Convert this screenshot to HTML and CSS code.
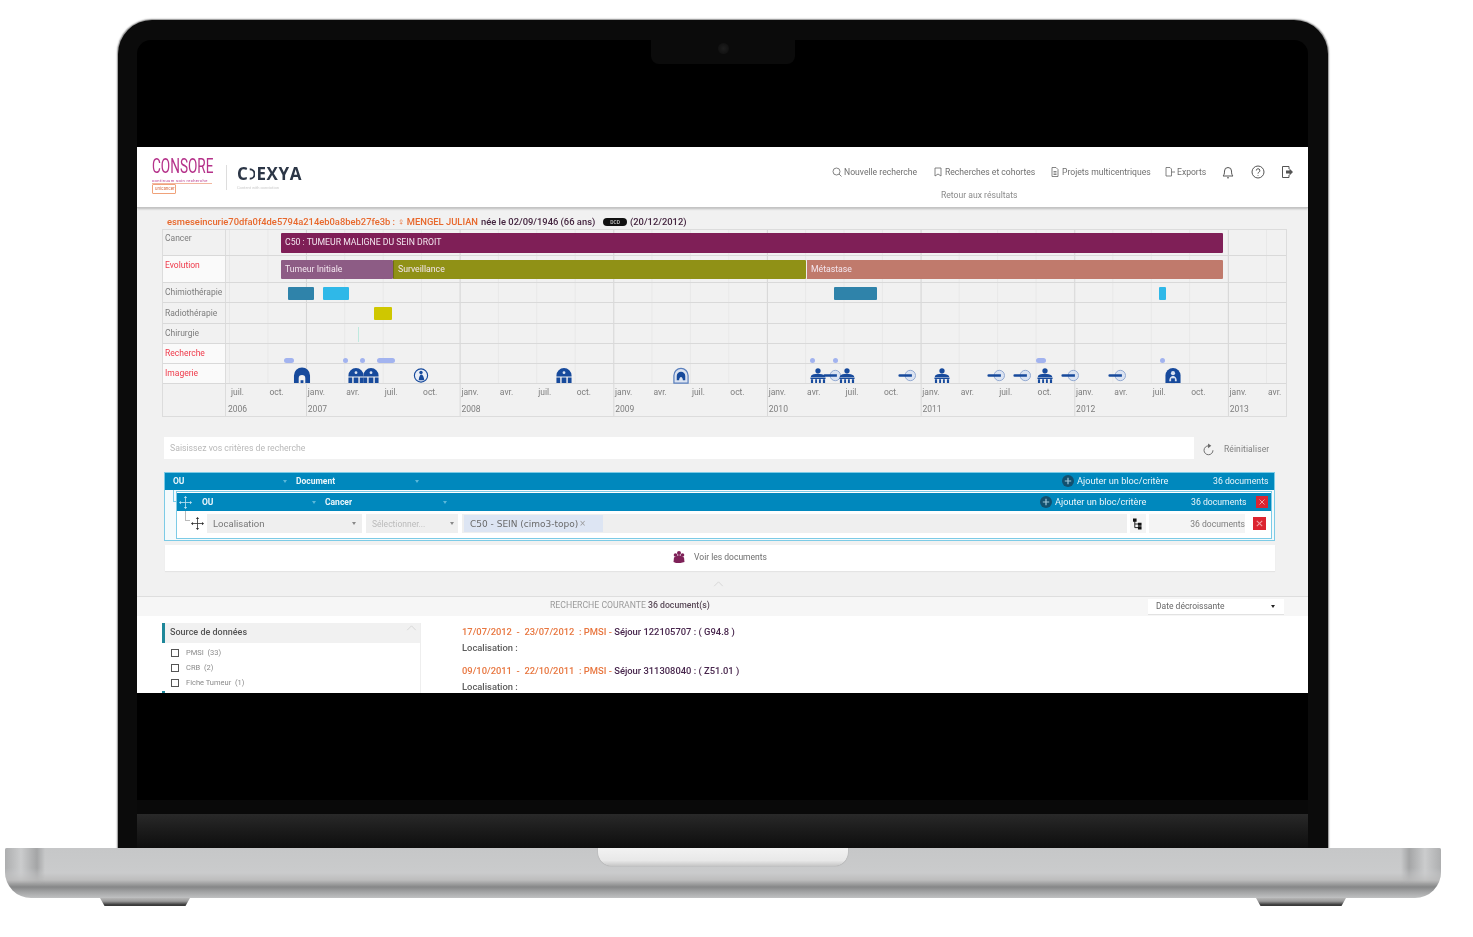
FILE: index.html
```html
<!DOCTYPE html>
<html lang="fr">
<head>
<meta charset="utf-8">
<title>Consore</title>
<link rel="stylesheet" href="styles.css">
</head>
<body>
<svg class="defs" width="0" height="0" aria-hidden="true">
  <symbol id="i-arch" viewBox="0 0 20 18"><path d="M1.500 17V9a8.500 8.500 0 0 1 17 0v8h-5V12a3.500 3.500 0 0 0-7 0v5z"/><path d="M8.500 17v-3h3v3z"/></symbol>
  <symbol id="i-irm" viewBox="0 0 20 18"><path d="M2 10V9a8 8 0 0 1 16 0v1zM2 11h4v6H2zM7.500 11h5v6h-5zM14 11h4v6h-4z"/><circle cx="10" cy="6" r="1.500" fill="#dbe3f1"/></symbol>
  <symbol id="i-circle" viewBox="0 0 20 18"><circle cx="10" cy="9" r="7" fill="#e9eef7" stroke="#174a9c" stroke-width="1.200"/><circle cx="10" cy="5.800" r="1.800"/><path d="M7.500 14c.500-4 1.500-6 3-6s2.500 3 3 6z"/></symbol>
  <symbol id="i-ring" viewBox="0 0 20 18"><path d="M2.500 17V9a7.500 7.500 0 0 1 15 0v8z" fill="#dbe3f1" stroke="#5a7fbd" stroke-width="1.300"/><path d="M5.500 14V9.500a4.500 4.500 0 0 1 9 0V14h-2.500c0-2-1-3.500-2-3.500S8 12 8 14z"/></symbol>
  <symbol id="i-table" viewBox="0 0 20 18"><circle cx="10" cy="4" r="2.800"/><path d="M2.500 9.500c2-3 12-3 15 0v1h-15zM2 11h16v1.800H2zM2.500 13h2.300v4H2.500zM7 13h2v4H7zM11 13h2v4h-2zM15.200 13h2.300v4h-2.300z"/></symbol>
  <symbol id="i-probe" viewBox="0 0 20 18"><circle cx="13.500" cy="9" r="5.500" fill="#dbe3f1" stroke="#8ea6cf" stroke-width="1"/><path d="M2.200 7.800h13v2.600h-13a1.300 1.300 0 0 1 0-2.600z"/></symbol>
  <symbol id="i-dome" viewBox="0 0 20 18"><path d="M2 17V9a8 8 0 0 1 16 0v8z"/><circle cx="10" cy="6.500" r="2.200" fill="#dbe3f1"/><path d="M6 15c0-4 2-5.500 4-5.500s4 1.500 4 5.500z" fill="#dbe3f1"/><path d="M8 12h4v5H8z"/></symbol>
  <symbol id="i-move" viewBox="0 0 16 16"><path d="M8 1v14M1 8h14" fill="none" stroke="currentColor" stroke-width="1"/><path d="M8 0l2 2.500H6zM8 16l-2-2.500h4zM0 8l2.500-2v4zM16 8l-2.500 2V6z" fill="currentColor"/></symbol>
  <symbol id="i-plus" viewBox="0 0 12 12"><circle cx="6" cy="6" r="6" fill="#12506f"/><path d="M6 2.800v6.400M2.800 6h6.400" stroke="#9fc7da" stroke-width="1.200"/></symbol>
  <symbol id="i-x" viewBox="0 0 12 12"><rect width="12" height="12" fill="#dc2430"/><path d="M3.500 3.500l5 5m0-5l-5 5" stroke="#f2a0a4" stroke-width="1"/></symbol>
</svg>

<div class="stage">
  <div class="lid">
    <div class="notch"><span class="camera"></span></div>
    <div class="screen">
      <div class="app">
        <header class="topbar">
          <div class="logo-consore">
            <div class="consore-name">CONSORE</div>
            <div class="consore-sub">continuum soin recherche</div>
            <div class="consore-tag">unicancer</div>
          </div>
          <div class="logo-sep"></div>
          <div class="logo-coexya">
            <div class="coexya-name">C<svg class="coexya-o" viewBox="0 0 8 14"><path d="M2 1.500a5.500 5.500 0 0 1 0 11" fill="none" stroke="#2c3646" stroke-width="2.200"/></svg>EXYA</div>
            <div class="coexya-sub">Content with conviction</div>
          </div>
          <nav class="nav">
            <div class="nav-main">
              <a class="nav-link nav-w1"><svg class="ic" viewBox="0 0 10 10"><circle cx="4.500" cy="4.500" r="3.500"/><path d="M7 7l2.500 2.500"/></svg>Nouvelle recherche</a>
              <a class="nav-link nav-w2"><svg class="ic" viewBox="0 0 10 10"><path d="M2 1h6v8L5 7 2 9z"/></svg>Recherches et cohortes</a>
              <a class="nav-link nav-w3"><svg class="ic" viewBox="0 0 10 10"><path d="M2 .500h4l2 2v7H2zM3.500 4.500h3M3.500 6h3M3.500 7.500h3"/></svg>Projets multicentriques</a>
              <a class="nav-link nav-w4"><svg class="ic" viewBox="0 0 10 10"><path d="M1 .500h4l1.500 1.500v7H1zM6.500 5H10"/></svg>Exports</a>
              <svg class="tool tool-bell" viewBox="0 0 14 14"><path d="M2 11c1-1 1.500-2 1.500-5a3.500 3.500 0 0 1 7 0c0 3 .500 4 1.500 5zM6 12.800h2"/></svg>
              <svg class="tool tool-help" viewBox="0 0 14 14"><circle cx="7" cy="7" r="6"/><path d="M5.300 5.500a1.800 1.800 0 1 1 2.500 1.700C7.200 7.500 7 8 7 8.600M7 10v.700"/></svg>
              <svg class="tool tool-out" viewBox="0 0 14 14"><path d="M9 4V1.500H2.500v11H9V10"/><path class="fill" d="M6 5.500h3.500V3.500L13 7l-3.500 3.500v-2H6z"/></svg>
            </div>
            <a class="nav-back">Retour aux résultats</a>
          </nav>
        </header>

        <main class="main">
          <div class="patient">
            <span class="p-id">esmeseincurie70dfa0f4de5794a214eb0a8beb27fe3b : ♀ MENGEL JULIAN</span>
            <span class="p-info">née le 02/09/1946 (66 ans)</span>
            <span class="p-badge">DCD</span>
            <span class="p-info">(20/12/2012)</span>
          </div>

          <section class="timeline">
            <div class="tl-row r26">
              <div class="tl-label">Cancer</div>
              <div class="track">
                <div class="bar bar-cancer" style="left:55px;width:942px">C50 : TUMEUR MALIGNE DU SEIN DROIT</div>
              </div>
            </div>
            <div class="tl-row r27">
              <div class="tl-label alert">Evolution</div>
              <div class="track">
                <div class="bar bar-evo evo-a" style="left:55px;width:112px">Tumeur Initiale</div>
                <div class="bar bar-evo evo-b" style="left:167px;width:413px">Surveillance</div>
                <div class="bar bar-evo evo-c" style="left:580px;width:417px">Métastase</div>
              </div>
            </div>
            <div class="tl-row r20">
              <div class="tl-label">Chimiothérapie</div>
              <div class="track">
                <div class="bar bar-treat c-dark" style="left:62px;width:26px"></div>
                <div class="bar bar-treat c-light" style="left:97px;width:26px"></div>
                <div class="bar bar-treat c-dark" style="left:608px;width:43px"></div>
                <div class="bar bar-treat c-light" style="left:933px;width:7px"></div>
              </div>
            </div>
            <div class="tl-row r21">
              <div class="tl-label">Radiothérapie</div>
              <div class="track">
                <div class="bar bar-treat c-yellow" style="left:148px;width:18px"></div>
              </div>
            </div>
            <div class="tl-row r20">
              <div class="tl-label">Chirurgie</div>
              <div class="track">
                <div class="bar bar-surg" style="left:132px;width:1px"></div>
              </div>
            </div>
            <div class="tl-row r20">
              <div class="tl-label alert pale">Recherche</div>
              <div class="track">
                <div class="bar bar-res" style="left:58px;width:10px"></div>
                <div class="bar bar-res" style="left:117px;width:5px"></div>
                <div class="bar bar-res" style="left:134px;width:5px"></div>
                <div class="bar bar-res" style="left:151px;width:18px"></div>
                <div class="bar bar-res" style="left:584px;width:5px"></div>
                <div class="bar bar-res" style="left:607px;width:5px"></div>
                <div class="bar bar-res" style="left:810px;width:10px"></div>
                <div class="bar bar-res" style="left:934px;width:5px"></div>
              </div>
            </div>
            <div class="tl-row r20">
              <div class="tl-label alert pale">Imagerie</div>
              <div class="track">
                <svg class="mark" style="left:65px"><use href="#i-arch"/></svg>
                <svg class="mark" style="left:119px"><use href="#i-irm"/></svg>
                <svg class="mark" style="left:134px"><use href="#i-irm"/></svg>
                <svg class="mark" style="left:184px"><use href="#i-circle"/></svg>
                <svg class="mark" style="left:327px"><use href="#i-irm"/></svg>
                <svg class="mark" style="left:444px"><use href="#i-ring"/></svg>
                <svg class="mark" style="left:581px"><use href="#i-table"/></svg>
                <svg class="mark" style="left:595px"><use href="#i-probe"/></svg>
                <svg class="mark" style="left:610px"><use href="#i-table"/></svg>
                <svg class="mark" style="left:670px"><use href="#i-probe"/></svg>
                <svg class="mark" style="left:705px"><use href="#i-table"/></svg>
                <svg class="mark" style="left:759px"><use href="#i-probe"/></svg>
                <svg class="mark" style="left:785px"><use href="#i-probe"/></svg>
                <svg class="mark" style="left:808px"><use href="#i-table"/></svg>
                <svg class="mark" style="left:833px"><use href="#i-probe"/></svg>
                <svg class="mark" style="left:880px"><use href="#i-probe"/></svg>
                <svg class="mark" style="left:936px"><use href="#i-dome"/></svg>
              </div>
            </div>
            <div class="tl-axis">
              <div class="axis-spacer"></div>
              <div class="axis">
                <div class="axis-months">
                  <span>juil.</span><span>oct.</span>
                  <span>janv.</span><span>avr.</span><span>juil.</span><span>oct.</span>
                  <span>janv.</span><span>avr.</span><span>juil.</span><span>oct.</span>
                  <span>janv.</span><span>avr.</span><span>juil.</span><span>oct.</span>
                  <span>janv.</span><span>avr.</span><span>juil.</span><span>oct.</span>
                  <span>janv.</span><span>avr.</span><span>juil.</span><span>oct.</span>
                  <span>janv.</span><span>avr.</span><span>juil.</span><span>oct.</span>
                  <span>janv.</span><span>avr.</span>
                </div>
                <div class="axis-years">
                  <span class="y-first">2006</span><span>2007</span><span>2008</span><span>2009</span><span>2010</span><span>2011</span><span>2012</span><span>2013</span>
                </div>
              </div>
            </div>
          </section>

          <div class="search-row">
            <div class="search-input">Saisissez vos critères de recherche</div>
            <svg class="reset-ic" viewBox="0 0 14 14"><path d="M7 2.500a4.800 4.800 0 1 0 4.800 4.800"/><path class="fill" d="M6.500 0v5L10 2.500z"/></svg>
            <span class="reset-text">Réinitialiser</span>
          </div>

          <section class="qb">
            <div class="qb-head">
              <span class="qb-op">OU</span><span class="caret caret-a"></span>
              <span class="qb-type">Document</span><span class="caret caret-b"></span>
              <svg class="plus"><use href="#i-plus"/></svg>
              <span class="qb-add">Ajouter un bloc/critère</span>
              <span class="qb-count">36 documents</span>
            </div>
            <div class="qb-inner">
              <div class="qb-head sub">
                <svg class="move-w"><use href="#i-move"/></svg>
                <span class="qb-op op-sub">OU</span><span class="caret caret-a"></span>
                <span class="qb-type">Cancer</span><span class="caret caret-b"></span>
                <svg class="plus"><use href="#i-plus"/></svg>
                <span class="qb-add">Ajouter un bloc/critère</span>
                <span class="qb-count count-sub">36 documents</span>
                <svg class="del del-sub"><use href="#i-x"/></svg>
              </div>
              <div class="qb-row">
                <svg class="move-k"><use href="#i-move"/></svg>
                <div class="cell cell-field">Localisation<span class="caret dark"></span></div>
                <div class="cell cell-select">Sélectionner...<span class="caret dark"></span></div>
                <div class="cell cell-value"><span class="chip">C50 - SEIN (cimo3-topo)<span class="chip-x">×</span></span></div>
                <div class="cell cell-tree"><svg class="tree" viewBox="0 0 10 12"><path d="M2 2v8h5M2 6h5" fill="none" stroke="#111" stroke-width="1"/><path d="M0 0h4v3.500H0zM5.500 4.500h4V8h-4zM5.500 8.500h4V12h-4z" fill="#111"/></svg></div>
                <div class="cell cell-count">36 documents</div>
                <svg class="del"><use href="#i-x"/></svg>
              </div>
            </div>
          </section>

          <div class="see-docs">
            <svg class="see-ic" viewBox="0 0 12 12"><g fill="#7e2158"><circle cx="6" cy="2" r="2"/><circle cx="2.500" cy="4" r="1.800"/><circle cx="9.500" cy="4" r="1.800"/><path d="M.500 11l.500-4.500 2.500-1.500 2.500-1 2.500 1 2.500 1.500.500 4.500-4 1H3z"/></g></svg>
            <span>Voir les documents</span>
          </div>
          <div class="collapse-row"><svg class="chev" viewBox="0 0 12 7"><path d="M1 6l5-5 5 5"/></svg></div>
        </main>

        <div class="result-bar">
          <span class="rb-text">RECHERCHE COURANTE <b>36 document(s)</b></span>
          <div class="sort">Date décroissante<span class="caret dark k"></span></div>
        </div>

        <section class="lower">
          <aside class="facets">
            <div class="facet-head">Source de données<svg class="chev facet-chev" viewBox="0 0 12 7"><path d="M1 6l5-5 5 5"/></svg></div>
            <ul class="facet-list">
              <li><span class="box"></span>PMSI&nbsp; (33)</li>
              <li><span class="box"></span>CRB&nbsp; (2)</li>
              <li><span class="box"></span>Fiche Tumeur&nbsp; (1)</li>
            </ul>
            <div class="facet-next"></div>
          </aside>
          <div class="docs">
            <div class="doc-title"><span class="d-or">17/07/2012 &nbsp;-&nbsp; 23/07/2012 &nbsp;: PMSI - </span><span class="d-da">Séjour 122105707 : ( G94.8 )</span></div>
            <div class="doc-loc">Localisation :</div>
            <div class="doc-title"><span class="d-or">09/10/2011 &nbsp;-&nbsp; 22/10/2011 &nbsp;: PMSI - </span><span class="d-da">Séjour 311308040 : ( Z51.01 )</span></div>
            <div class="doc-loc">Localisation :</div>
          </div>
        </section>
      </div>
    </div>
    <div class="hinge-top"></div>
    <div class="hinge"></div>
  </div>
  <div class="base">
    <div class="base-corner left"></div>
    <div class="base-corner right"></div>
    <div class="thumb"></div>
  </div>
  <div class="feet"><span class="foot"></span><span class="foot"></span></div>
</div>
</body>
</html>
```

FILE: styles.css
```css
* { box-sizing: border-box; }
html, body { margin: 0; padding: 0; background: #fff; }
body { font-family: Roboto, "Liberation Sans", sans-serif; }
.defs { position: absolute; }
.stage { width: 1473px; height: 937px; overflow: hidden; background: #fff; padding-top: 20px; }

/* ---------- laptop ---------- */
.lid {
  position: relative;
  width: 1210px; height: 828px; margin-left: 118px;
  padding: 20px 20px 0 19px;
  background: #0b0b0b;
  border-radius: 34px 34px 0 0;
  box-shadow: 0 0 1.5px 0.5px #8b8b8b;
}
.notch {
  position: absolute; left: 533px; top: 4px;
  width: 144px; height: 40px;
  background: #0b0b0b; border-radius: 0 0 8px 8px;
  z-index: 2; display: flex; align-items: center; justify-content: center; padding-top: 8px;
}
.camera { width: 11px; height: 11px; border-radius: 50%; background: radial-gradient(circle, #1e1e1e, #121212 70%); }
.screen { height: 760px; padding-top: 107px; background: #000; border-radius: 14px 14px 0 0; }
.hinge-top { height: 14px; background: #090909; }
.hinge { height: 34px; background: linear-gradient(#292929, #1c1c1c 45%, #0e0e0e); }

.base {
  position: relative;
  width: 1436px; height: 50px; margin-left: 5px;
  border-radius: 2px 2px 26px 26px;
  overflow: hidden;
  background: linear-gradient(#c6c7c8 0, #cacbcc 50%, #bdbdbd 64%, #868788 78%, #a3a4a5 88%, #c0c1c2 100%);
}
.base-corner { position: absolute; top: 0; width: 40px; height: 36px; -webkit-mask-image: linear-gradient(#000 55%, transparent); mask-image: linear-gradient(#000 55%, transparent); }
.base-corner.left { left: 0; background: linear-gradient(90deg, #adaeaf, #cbcccd 40%, #a4a5a6 80%, transparent); }
.base-corner.right { right: 0; background: linear-gradient(270deg, #adaeaf, #cbcccd 40%, #a4a5a6 80%, transparent); }
.thumb {
  position: absolute; left: 593px; top: 0;
  width: 250px; height: 18px;
  border-radius: 0 0 14px 14px;
  background: linear-gradient(#f2f2f2, #e8e8e8 70%, #c6c6c6);
  box-shadow: 0 0 1px #777;
}
.feet { display: flex; justify-content: space-between; padding: 0 127px 0 100px; }
.foot {
  width: 90px; height: 8px;
  background: linear-gradient(#b5b5b5, #9a9a9a 40%, #3a3a3a 85%);
  clip-path: polygon(0 0, 100% 0, 95% 100%, 5% 100%);
}

/* ---------- app ---------- */
.app { height: 546px; overflow: hidden; background: #f1f1f1; color: #777; font-size: 9px; filter: blur(0.4px); }

.topbar {
  display: flex; height: 61px; background: #fff;
  border-bottom: 1px solid #c4c4c4; box-shadow: 0 1px 2px #bbb;
  position: relative;
  padding: 11px 14px 0 15px;
}
.logo-consore { width: 60px; flex: none; }
.consore-name { width: 60px; font-family: Roboto, sans-serif; font-size: 20px; line-height: 16px; color: #b5328a; transform: scaleX(0.68); transform-origin: left top; white-space: nowrap; }
.consore-sub { margin-top: 4px; font-size: 4px; line-height: 5px; letter-spacing: 0.4px; color: #b5328a; white-space: nowrap; border-bottom: 1px solid #f2b7a0; overflow: hidden; }
.consore-tag { margin-top: 0; width: 24px; height: 10px; border: 1px solid #f0a27a; border-radius: 1px; font-size: 4.500px; line-height: 7px; color: #d8704a; padding-left: 2px; overflow: hidden; }
.logo-sep { width: 1px; height: 25px; margin: 7px 10px 0 14px; background: #ddd; flex: none; }
.logo-coexya { margin-top: 7px; }
.coexya-name { display: flex; align-items: center; font-size: 17px; line-height: 17px; font-weight: 700; color: #2c3646; letter-spacing: 0.6px; font-family: "Open Sans", Roboto, sans-serif; }
.coexya-o { width: 7px; height: 14px; margin-right: 1px; }
.coexya-sub { margin-top: 3px; font-size: 4px; line-height: 5px; color: #c9c9c9; }

.nav { margin-left: auto; width: 462px; padding-top: 6px; }
.nav-main { display: flex; align-items: center; height: 16px; }
.nav-link { display: flex; align-items: center; white-space: nowrap; color: #6f6f6f; font-size: 8.600px; }
.nav-w1 { width: 101px; }
.nav-w2 { width: 117px; }
.nav-w3 { width: 115px; }
.nav-w4 { width: 56px; }
.ic { width: 10px; height: 10px; margin-right: 2px; fill: none; stroke: #666; stroke-width: 0.8; flex: none; }
.tool { width: 14px; height: 14px; fill: none; stroke: #555; stroke-width: 1; flex: none; }
.tool .fill { fill: #555; stroke: none; }
.tool-help { margin-left: 16px; }
.tool-out { margin-left: 15px; }
.nav-back { display: block; margin: 10px 0 0 109px; font-size: 8.600px; line-height: 10px; color: #8a8a8a; }

.main { padding: 7px 21px 0 25px; }
.patient { height: 14px; padding-left: 5px; line-height: 14px; font-size: 9.400px; font-weight: 500; white-space: nowrap; display: flex; align-items: center; gap: 3px; }
.p-id { color: #e8682c; }
.p-info { color: #43243f; }
.p-badge { background: #111; color: #ccc; border-radius: 5px; font-size: 5px; line-height: 8px; padding: 0 7px; margin: 0 0 0 5px; }

/* ---------- timeline ---------- */
.timeline { border: 1px solid #dcdcdc; }
.tl-row { display: flex; border-bottom: 1px solid #d9d9d9; }
.r26 { height: 26px; }
.r27 { height: 27px; }
.r20 { height: 20px; }
.r21 { height: 21px; }
.tl-label { width: 63px; flex: none; padding: 3px 0 0 2px; font-size: 8.500px; line-height: 12px; color: #7d7d7d; border-right: 1px solid #dcdcdc; white-space: nowrap; }
.r26 .tl-label { padding-top: 2px; }
.r21 .tl-label { padding-top: 4px; }
.tl-label.alert { color: #ef3a4a; background: #fafafa; }
.track {
  position: relative; flex: 1;
  background-color: #f1f1f1;
  background-image:
    linear-gradient(90deg, #d8d8d8 1px, transparent 1px),
    linear-gradient(90deg, #e8e8e8 1px, transparent 1px);
  background-size: 153.670px 100%, 38.420px 100%;
  background-position: 80px 0, 3px 0;
}
.bar { position: absolute; white-space: nowrap; overflow: hidden; color: #f3e6ef; font-size: 8.700px; }
.bar-cancer { top: 3px; height: 20px; line-height: 19px; padding-left: 4px; background: #7f1f57; border-radius: 1px; }
.bar-evo { top: 4px; height: 19px; line-height: 19px; padding-left: 4px; border-radius: 1px; }
.evo-a { background: #8d5c85; }
.evo-b { background: #909116; border-left: 1px solid #6f7010; }
.evo-c { background: #c07a6c; border-left: 1px solid #eee; }
.bar-treat { top: 4px; height: 13px; border-radius: 1px; }
.c-dark { background: #2f83aa; }
.c-light { background: #2fb8e8; }
.c-yellow { background: #cfc700; }
.bar-surg { top: 3px; height: 15px; background: #bfe9df; }
.bar-res { top: 14px; height: 5px; background: #a2b3ef; border-radius: 3px; }
.mark { position: absolute; top: 3px; width: 20px; height: 17px; fill: #174a9c; margin-left: 1px; }

.tl-axis { display: flex; height: 32px; }
.axis-spacer { width: 63px; flex: none; border-right: 1px solid #dcdcdc; }
.axis { flex: 1; padding-left: 3px; background: #f1f1f1;
  background-image: linear-gradient(90deg, #d8d8d8 1px, transparent 1px);
  background-size: 153.670px 100%; background-position: 80px 0; overflow: hidden; }
.axis-months { display: grid; grid-template-columns: repeat(28, 38.420px); padding-top: 3px; font-size: 8.500px; line-height: 11px; color: #7d7d7d; }
.axis-months span { padding-left: 2px; }
.axis-years { display: flex; margin-left: -1px; padding-top: 6px; font-size: 8.500px; line-height: 11px; color: #7d7d7d; }
.axis-years span { width: 153.670px; flex: none; padding-left: 3px; }
.axis-years .y-first { width: 76.840px; padding-left: 0; }

/* ---------- search ---------- */
.search-row { display: flex; align-items: center; margin: 20px 0 0 2px; height: 22px; }
.search-input { width: 1030px; height: 22px; background: #fff; padding-left: 6px; line-height: 22px; font-size: 8.700px; color: #b9b9b9; }
.reset-ic { width: 13px; height: 14px; margin: 3px 0 0 8px; fill: none; stroke: #666; stroke-width: 1; }
.reset-ic .fill { fill: #666; stroke: none; }
.reset-text { margin: 2px 0 0 9px; font-size: 8.500px; color: #808080; letter-spacing: 0.1px; }

/* ---------- query builder ---------- */
.qb { position: relative; width: 1111px; height: 69px; margin: 13px 0 0 2px; border: 1px solid #7ccbe6; background: #f4fafc; }
.qb::before { content: ""; position: absolute; left: 8px; top: 17px; width: 4px; height: 11px; border-left: 1px solid #7ccbe6; border-bottom: 1px solid #7ccbe6; }
.qb-head { display: flex; align-items: center; height: 17px; padding-bottom: 1px; background: #0088bd; color: #eaf6fb; font-size: 8.500px; padding-left: 8px; position: relative; }
.qb-op { width: 112px; font-weight: 700; }
.qb-type { width: 121px; font-weight: 700; white-space: nowrap; }
.caret { display: inline-block; width: 0; height: 0; border-left: 2px solid transparent; border-right: 2px solid transparent; border-top: 3px solid #5bb8da; }
.caret-a { margin-left: -2px; margin-right: 9px; }
.caret-b { margin-left: -2px; }
.caret.dark { border-top-color: #888; margin-left: auto; }
.caret.k { border-top-color: #222; }
.plus { width: 12px; height: 12px; margin-left: auto; flex: none; }
.qb-add { width: 139px; padding-left: 3px; margin-bottom: 1px; flex: none; white-space: nowrap; font-size: 9.200px; }
.qb-count { width: 61px; flex: none; white-space: nowrap; font-size: 8.700px; }

.qb-inner { position: relative; margin: 1px 2px 0 11px; height: 48px; border: 1px solid #7ccbe6; background: #fff; padding-top: 1px; }
.sub { height: 18px; padding-left: 2px; padding-bottom: 0; }
.sub .qb-type { width: 120px; }
.move-w { width: 13px; height: 13px; color: #bfe3f1; flex: none; margin-right: 10px; }
.op-sub { width: 112px; }
.count-sub { width: 65px; }
.del { width: 13px; height: 13px; flex: none; margin-left: 5px; }
.del-sub { width: 12px; height: 14px; margin: 0 3px 0 0; }

.qb-row { display: flex; align-items: center; height: 19px; margin-top: 3px; padding-left: 14px; gap: 3px; }
.qb-row::before { content: ""; position: absolute; left: 8px; top: 19px; width: 4px; height: 9px; border-left: 1px solid #bbb; border-bottom: 1px solid #bbb; }
.move-k { width: 13px; height: 13px; color: #333; flex: none; }
.cell { display: flex; align-items: center; height: 19px; background: #efefef; padding: 0 4px; flex: none; white-space: nowrap; }
.cell-field { width: 155px; padding: 0 6px; font-size: 9.500px; color: #777; }
.cell-select { width: 92px; padding-left: 6px; font-size: 8.500px; color: #bbb; margin-left: 1px; }
.cell-value { width: 665px; padding: 0 0 0 2px; margin-left: 1px; }
.chip { display: flex; align-items: center; height: 17px; width: 139px; padding-left: 6px; background: #dde5f3; font-family: "DejaVu Sans", sans-serif; font-size: 9px; color: #6a6a6a; white-space: nowrap; overflow: hidden; }
.chip-x { margin-left: 1px; color: #999; font-size: 8px; }
.cell-tree { width: 16px; padding: 0 3px; background: #f4f4f4; }
.tree { width: 9px; height: 12px; }
.cell-count { width: 96px; justify-content: flex-end; padding: 0; font-size: 8.600px; color: #7d7d7d; background: #f4f4f4; }

.see-docs { display: flex; align-items: center; justify-content: center; gap: 9px; width: 1110px; height: 26px; padding-bottom: 2px; margin: 4px 0 0 3px; background: #fff; font-size: 8.500px; color: #6d6d6d; box-shadow: 0 1px 1px #e4e4e4; }
.see-ic { width: 12px; height: 12px; }
.collapse-row { height: 25px; display: flex; justify-content: center; padding: 10px 14px 0 0; margin-left: 2px; }
.chev { width: 11px; height: 6px; fill: none; stroke: #d2d2d2; stroke-width: 1; }

/* ---------- results ---------- */
.result-bar { display: flex; align-items: center; height: 20px; background: #f6f6f6; border-top: 1px solid #dedede; padding: 0 24px 0 413px; }
.rb-text { font-size: 8.700px; color: #9a9a9a; white-space: nowrap; margin-bottom: 3px; }
.rb-text b { font-weight: 500; color: #5a4a58; }
.sort { display: flex; align-items: center; margin-left: auto; width: 136px; height: 16px; padding: 0 9px 0 8px; background: #fff; border-bottom: 1px solid #e2e2e2; font-size: 8.500px; color: #666; }

.lower { display: flex; height: 77px; background: #fff; padding-left: 25px; overflow: hidden; }
.facets { position: relative; width: 259px; margin-top: 7px; flex: none; border-right: 1px solid #eee; }
.facet-head { display: flex; align-items: center; height: 20px; padding: 0 3px 2px 5px; background: #f1f1f1; border-left: 3px solid #1e8799; font-size: 9px; font-weight: 500; color: #555; }
.facet-chev { margin-left: auto; margin-top: -9px; }
.facet-list { list-style: none; margin: 2px 0 0; padding: 0 0 0 9px; font-size: 7.500px; color: #8a8a8a; }
.facet-list li { display: flex; align-items: center; height: 15px; }
.box { width: 8px; height: 8px; margin-right: 7px; border: 1px solid #555; flex: none; }
.facet-next { height: 6px; width: 3px; background: #1e8799; margin-top: 1px; }

.docs { margin-left: 41px; padding-top: 8px; font-weight: 500; font-size: 9.400px; }
.doc-title { height: 16px; line-height: 15px; white-space: pre-wrap; }
.doc-loc { height: 23px; line-height: 15px; color: #5c5c5c; }
.d-or { color: #e8763f; }
.d-da { color: #47254c; }
```
